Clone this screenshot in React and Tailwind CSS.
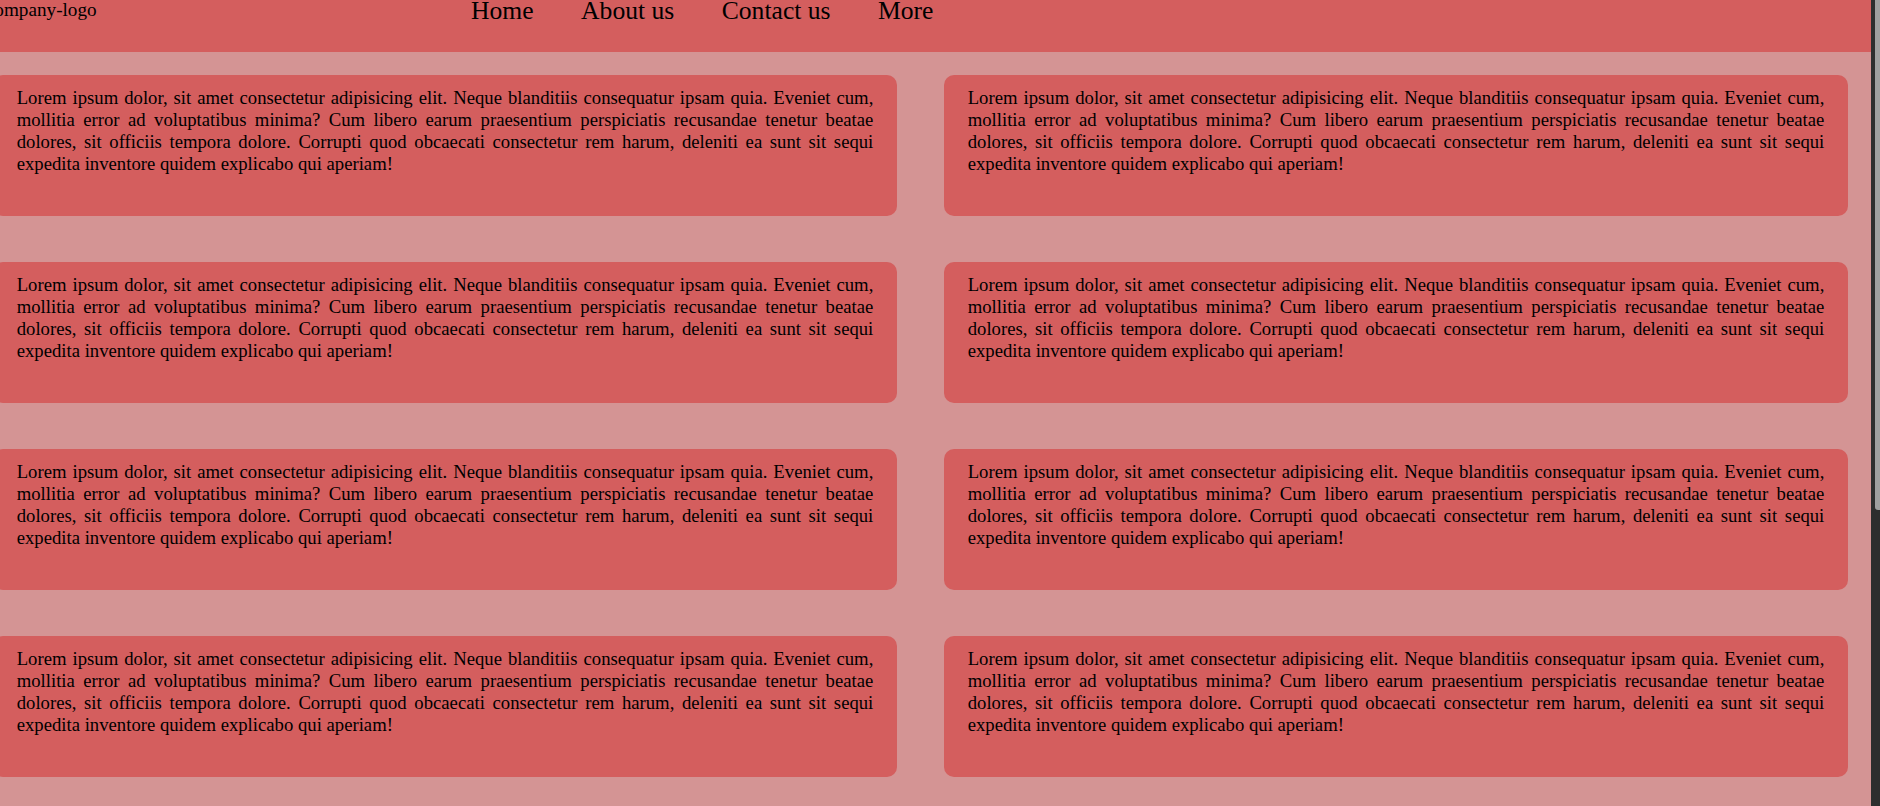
import React from 'react'

const lorem =
  'Lorem ipsum dolor, sit amet consectetur adipisicing elit. Neque blanditiis consequatur ipsam quia. Eveniet cum, mollitia error ad voluptatibus minima? Cum libero earum praesentium perspiciatis recusandae tenetur beatae dolores, sit officiis tempora dolore. Corrupti quod obcaecati consectetur rem harum, deleniti ea sunt sit sequi expedita inventore quidem explicabo qui aperiam!'

const links = ['Home', 'About us', 'Contact us', 'More']

function Card() {
  return (
    <div className="h-[140.7px] rounded-[10px] bg-[#d45e5e] px-[23.4px] pt-[12px]">
      <p className="text-justify text-[18.7px] leading-[21.9px] text-black">{lorem}</p>
    </div>
  )
}

export default function App() {
  return (
    <div
      className="flex h-[806px] w-[1880px] overflow-hidden bg-[#d49494]"
      style={{ fontFamily: '"Liberation Serif", "Times New Roman", serif' }}
    >
      <div className="flex-1 overflow-hidden">
        {/* header */}
        <header className="flex h-[52px] items-start bg-[#d45e5e] text-black">
          <span className="-ml-[14.2px] -mt-[1.5px] text-[19.2px] leading-[22px]">company-logo</span>
          <nav className="ml-[374.4px] -mt-[4.4px] flex gap-[47.5px] text-[25.6px] leading-[29.4px]">
            {links.map((l) => (
              <a key={l} href="#" className="text-black">
                {l}
              </a>
            ))}
          </nav>
        </header>

        {/* cards */}
        <div className="-ml-[6.7px] mr-[23.3px] mt-[23px] grid grid-cols-2 gap-x-[47.6px] gap-y-[46.3px]">
          {Array.from({ length: 8 }).map((_, i) => (
            <Card key={i} />
          ))}
        </div>
      </div>

      {/* scrollbar */}
      <div className="w-[9px] shrink-0 bg-[#2e2e2e]">
        <div className="ml-[4px] h-[510px] w-[5px] rounded-bl-[3px] bg-[#9f9f9f]" />
      </div>
    </div>
  )
}
